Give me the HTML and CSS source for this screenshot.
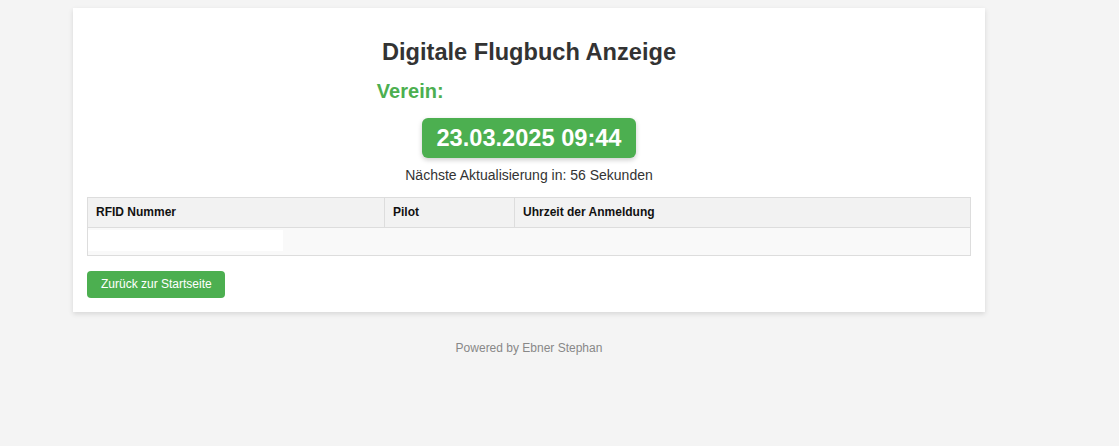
FILE: index.html
```html
<!DOCTYPE html>
<html lang="de">
<head>
<meta charset="utf-8">
<title>Digitale Flugbuch Anzeige</title>
<link rel="stylesheet" href="styles.css">
</head>
<body>
<div class="page">
  <div class="container">
    <h1 class="title">Digitale Flugbuch Anzeige</h1>
    <h2 class="verein">Verein: <span class="verein-name"></span></h2>
    <div class="date-wrap"><div class="date">23.03.2025 09:44</div></div>
    <p class="refresh">Nächste Aktualisierung in: 56 Sekunden</p>
    <table class="log">
      <thead>
        <tr>
          <th class="c1">RFID Nummer</th>
          <th class="c2">Pilot</th>
          <th class="c3">Uhrzeit der Anmeldung</th>
        </tr>
      </thead>
      <tbody>
        <tr>
          <td colspan="3" class="empty"><div class="blank"></div></td>
        </tr>
      </tbody>
    </table>
    <a class="btn" href="#">Zurück zur Startseite</a>
  </div>
  <p class="footer">Powered by Ebner Stephan</p>
</div>
</body>
</html>
```
FILE: styles.css
```css
html, body {
  margin: 0;
  padding: 0;
  background: #f4f4f4;
  font-family: "Liberation Sans", Arial, sans-serif;
  color: #333;
}
.page {
  width: 912px;
  margin-left: 73px;
  padding-top: 8px;
}
.container {
  background: #fff;
  padding: 14px 14px 14px;
  box-shadow: 0 2px 5px rgba(0,0,0,0.12);
}
.title {
  margin: 16px 0 0;
  font-size: 23.6px;
  line-height: 28px;
  text-align: center;
  color: #333;
}
.verein {
  margin: 13px 0 0;
  font-size: 20px;
  line-height: 24px;
  color: #4CAF50;
  text-align: center;
}
.verein-name {
  display: inline-block;
  width: 232px;
}
.date-wrap {
  display: flex;
  justify-content: center;
  margin-top: 15px;
}
.date {
  background: #4CAF50;
  color: #fff;
  font-size: 23.6px;
  font-weight: bold;
  line-height: 28px;
  padding: 6px 15px;
  border-radius: 6px;
  box-shadow: 0 2px 5px rgba(0,0,0,0.2);
}
.refresh {
  margin: 8px 0 0;
  font-size: 14px;
  line-height: 18px;
  text-align: center;
  color: #333;
}
.log {
  margin-top: 13px;
  width: 100%;
  border-collapse: collapse;
  font-size: 12px;
}
.log th {
  background: #f2f2f2;
  border: 1px solid #ddd;
  text-align: left;
  padding: 7px 8px;
  line-height: 15px;
  color: #111;
}
.c1 { width: 280px; }
.c2 { width: 113px; }
.log td {
  border: 1px solid #ddd;
  background: #f9f9f9;
  padding: 2px 0 4px;
}
.blank {
  width: 195px;
  height: 21px;
  background: #fff;
}
.btn {
  display: inline-block;
  margin-top: 15px;
  background: #4CAF50;
  color: #fff;
  text-decoration: none;
  font-size: 12px;
  line-height: 15px;
  padding: 6px 13px 6px 14px;
  border-radius: 4px;
}
.footer {
  margin: 29px 0 0;
  text-align: center;
  font-size: 12px;
  color: #888;
}
```
